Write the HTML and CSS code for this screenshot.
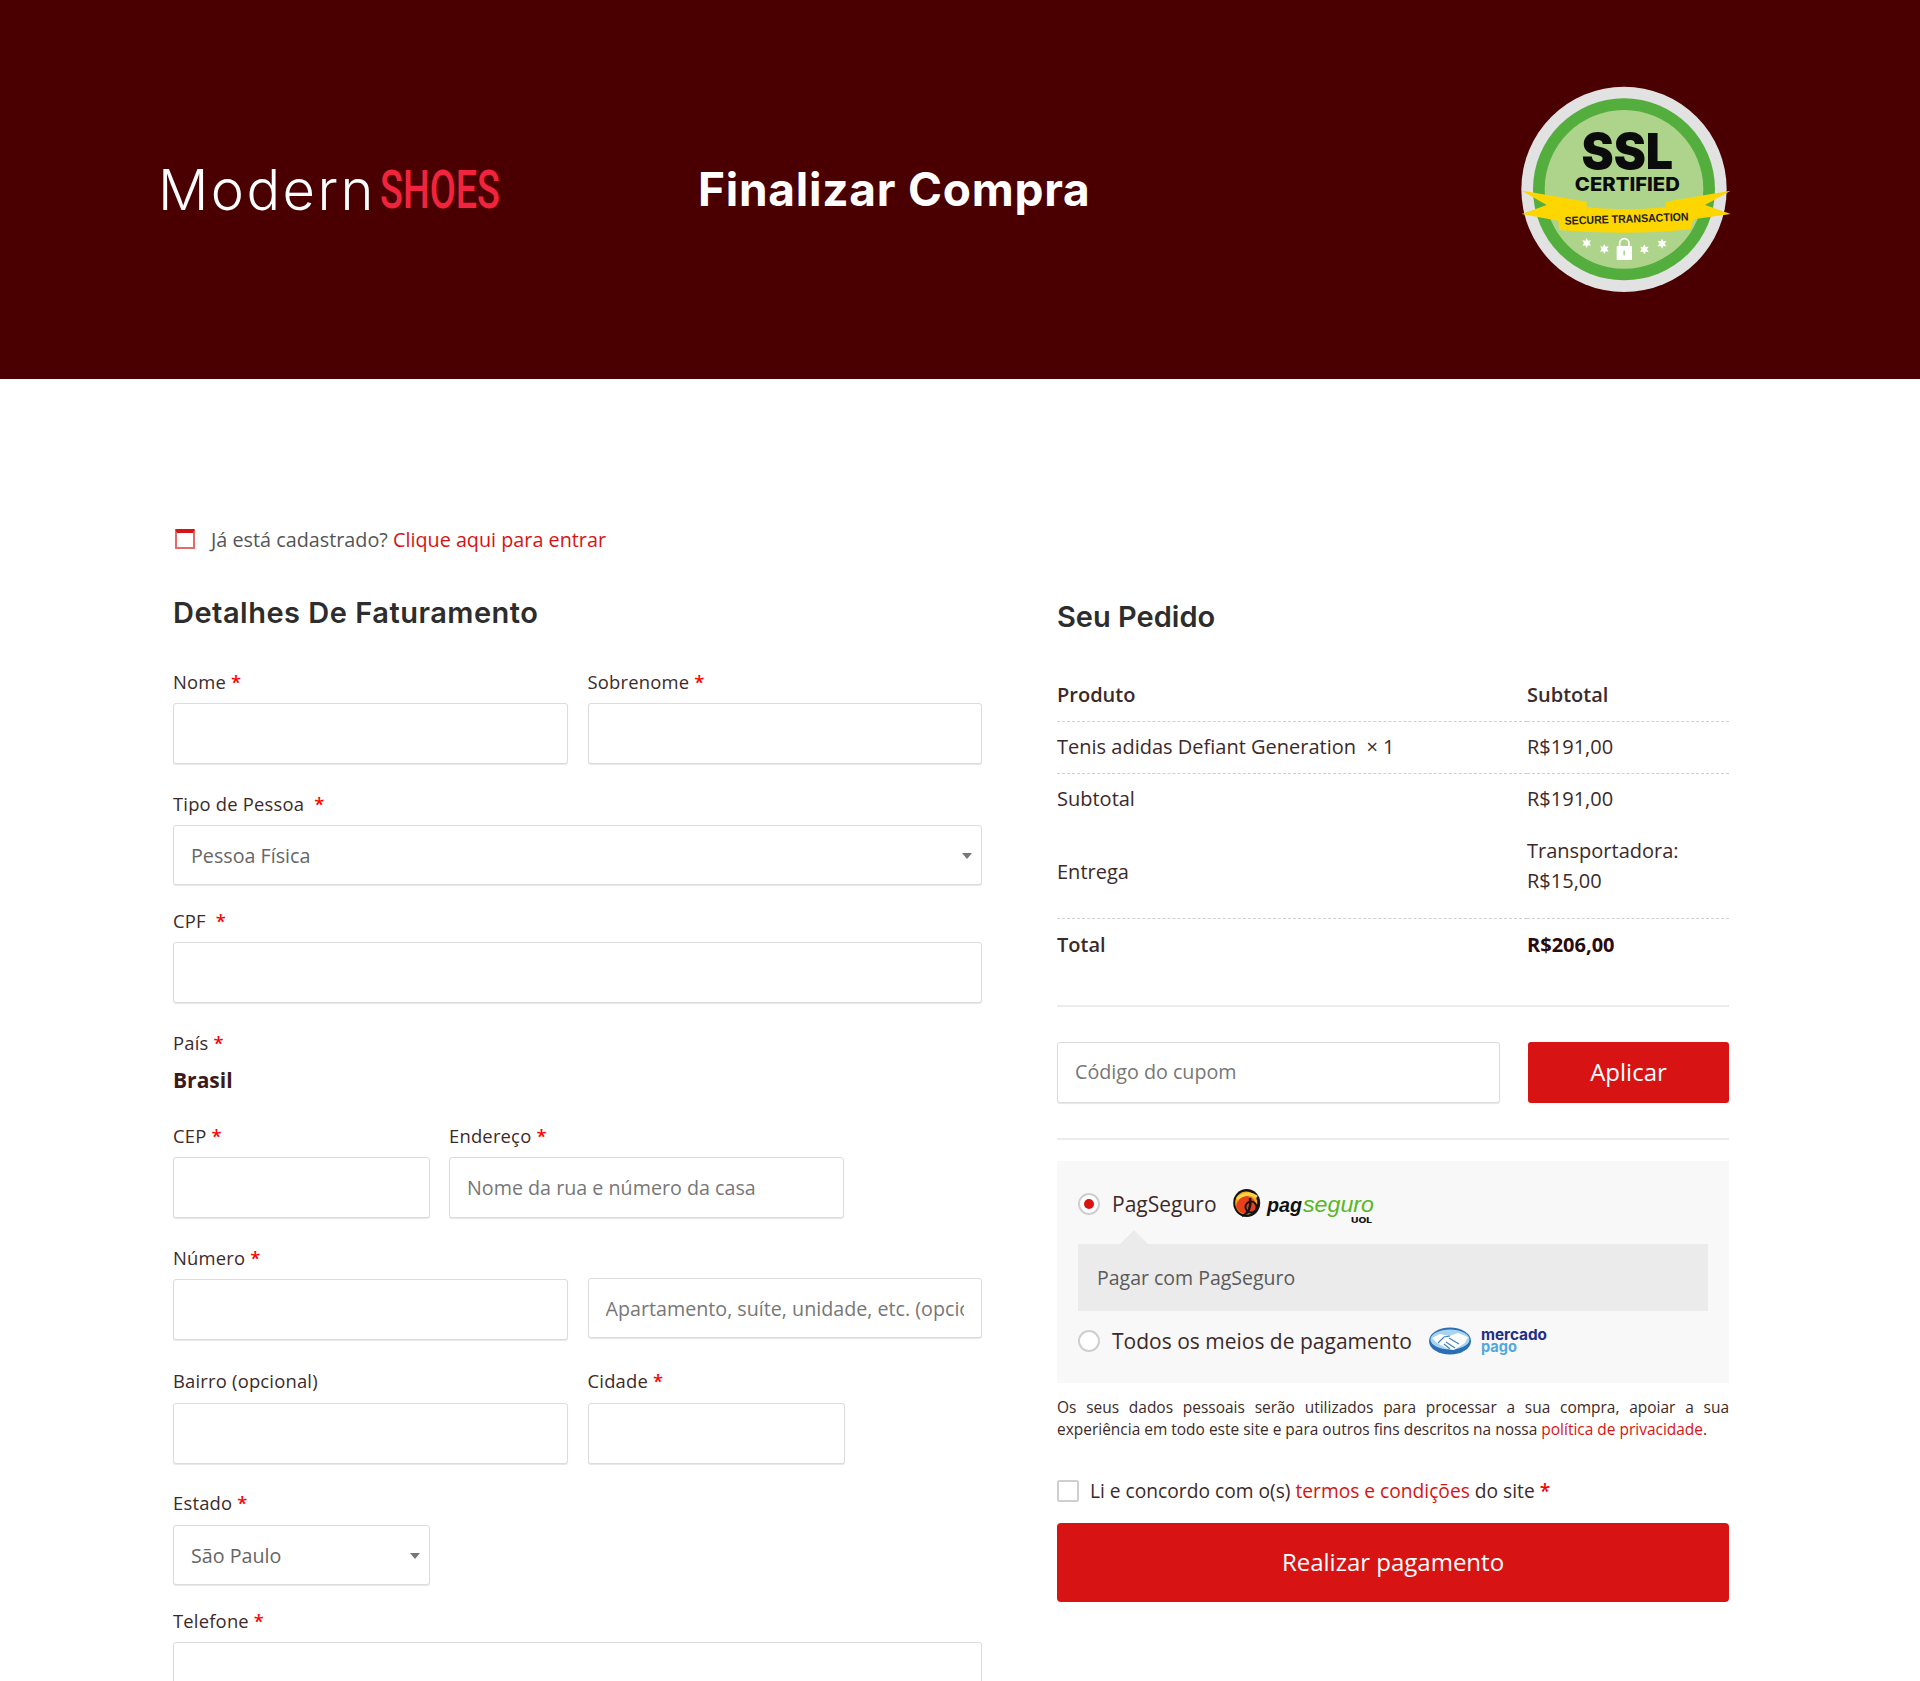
FILE: index.html
```html
<!DOCTYPE html>
<html lang="pt-BR">
<head>
<meta charset="utf-8">
<title>Finalizar Compra</title>
<link rel="stylesheet" href="styles.css">
</head>
<body>
<header class="top">
  <div class="logo"><span class="logo-modern">Modern</span><span class="logo-shoes">SHOES</span></div>
  <h1 class="page-title">Finalizar Compra</h1>
  <svg class="ssl" viewBox="0 0 750 720" width="250" height="240" aria-label="SSL Certified">
    <circle cx="372" cy="358" r="308" fill="#e2e2e2"/>
    <circle cx="372" cy="358" r="273" fill="#54ae3e"/>
    <circle cx="372" cy="358" r="238" fill="#aed48c"/>
    <text x="382" y="297" class="ssl-big" textLength="275" lengthAdjust="spacingAndGlyphs">SSL</text>
    <text x="382" y="364" class="ssl-mid" textLength="315" lengthAdjust="spacingAndGlyphs">CERTIFIED</text>
    <path d="M65 362 260 395V412Q380 424 497 412V395L692 362 615 405 692 432 580 448 572 478Q380 498 178 480L175 452 65 432 140 405Z" fill="#fdd600"/>
    <text x="380" y="458" class="ssl-small" textLength="372" lengthAdjust="spacingAndGlyphs" transform="rotate(-2 380 450)">SECURE TRANSACTION</text>
    <g fill="#fff">
      <path transform="translate(260 519)" d="M0-15 4-7 13-8 8 0 13 8 4 7 0 15-4 7-13 8-8 0-13-8-4-7Z"/>
      <path transform="translate(313 537)" d="M0-15 4-7 13-8 8 0 13 8 4 7 0 15-4 7-13 8-8 0-13-8-4-7Z"/>
      <path transform="translate(433 538)" d="M0-15 4-7 13-8 8 0 13 8 4 7 0 15-4 7-13 8-8 0-13-8-4-7Z"/>
      <path transform="translate(486 521)" d="M0-15 4-7 13-8 8 0 13 8 4 7 0 15-4 7-13 8-8 0-13-8-4-7Z"/>
      <rect x="350" y="528" width="46" height="42" rx="2"/>
      <path d="M359 530V520a14 14 0 0 1 28 0V530" fill="none" stroke="#fff" stroke-width="5"/>
      <rect x="370" y="542" width="5" height="14" fill="#aed48c"/>
    </g>
  </svg>
</header>

<main class="checkout">
  <section class="billing">
    <p class="notice">
      <span class="notice-icon"></span>
      <span>Já está cadastrado? <a href="#" class="link">Clique aqui para entrar</a></span>
    </p>
    <h2 class="billing-title">Detalhes De Faturamento</h2>

    <div class="row">
      <div class="field half"><label>Nome <b>*</b></label><input class="input"></div>
      <div class="field half"><label>Sobrenome <b>*</b></label><input class="input"></div>
    </div>
    <div class="field field-tight"><label>Tipo de Pessoa &nbsp;<b>*</b></label>
      <div class="select">Pessoa Física</div>
    </div>
    <div class="field"><label>CPF &nbsp;<b>*</b></label><input class="input"></div>
    <div class="field country"><label>País <b>*</b></label><strong class="country-name">Brasil</strong></div>
    <div class="row">
      <div class="field third"><label>CEP <b>*</b></label><input class="input"></div>
      <div class="field half"><label>Endereço <b>*</b></label><input class="input" placeholder="Nome da rua e número da casa"></div>
    </div>
    <div class="row row-wide">
      <div class="field half"><label>Número <b>*</b></label><input class="input"></div>
      <div class="half apt"><input class="input input-short" placeholder="Apartamento, suíte, unidade, etc. (opcional)"></div>
    </div>
    <div class="row row-loose">
      <div class="field half"><label>Bairro (opcional)</label><input class="input"></div>
      <div class="field third"><label>Cidade <b>*</b></label><input class="input"></div>
    </div>
    <div class="field field-tight third"><label>Estado <b>*</b></label>
      <div class="select select-state">São Paulo</div>
    </div>
    <div class="field"><label>Telefone <b>*</b></label><input class="input"></div>
  </section>

  <aside class="order">
    <h2 class="order-title">Seu Pedido</h2>
    <table class="order-table">
      <thead>
        <tr class="dash"><th>Produto</th><th class="col-2">Subtotal</th></tr>
      </thead>
      <tbody>
        <tr class="dash"><td>Tenis adidas Defiant Generation &nbsp;<span class="qty">× 1</span></td><td class="col-2">R$191,00</td></tr>
        <tr><td>Subtotal</td><td class="col-2">R$191,00</td></tr>
        <tr class="dash"><td>Entrega</td><td class="col-2 ship">Transportadora:<br>R$15,00</td></tr>
        <tr class="total"><th>Total</th><th class="col-2 strong">R$206,00</th></tr>
      </tbody>
    </table>
    <div class="coupon">
      <input class="input coupon-input" placeholder="Código do cupom">
      <button class="btn btn-apply" type="button">Aplicar</button>
    </div>

    <div class="payment">
      <div class="pay-option">
        <span class="radio radio-on"></span>
        <span>PagSeguro</span>
        <svg class="pag-logo" viewBox="0 0 150 42" width="150" height="42" aria-label="PagSeguro UOL">
          <ellipse cx="17.7" cy="20" rx="13.5" ry="14" fill="#141414"/>
          <ellipse cx="17.2" cy="20" rx="11" ry="11.5" fill="#f6a81c"/>
          <path d="M7 24Q8 14 18 13Q25 14 27 21Q27 31 17 31Q10 30 7 24Z" fill="#e8401c"/>
          <path d="M8 16Q18 7 28 14" fill="none" stroke="#fbd34d" stroke-width="3"/>
          <path d="M13 33Q23 29 21 15" fill="none" stroke="#141414" stroke-width="2.4"/>
          <circle cx="22" cy="24" r="5.5" fill="none" stroke="#141414" stroke-width="2"/>
          <text x="38" y="29" class="pag-a" textLength="35" lengthAdjust="spacingAndGlyphs">pag</text>
          <text x="74" y="29" class="pag-b" textLength="71" lengthAdjust="spacingAndGlyphs">seguro</text>
          <text x="122" y="40" class="pag-c" textLength="21" lengthAdjust="spacingAndGlyphs">UOL</text>
        </svg>
      </div>
      <div class="pay-desc">Pagar com PagSeguro</div>
      <div class="pay-option pay-option-2">
        <span class="radio"></span>
        <span>Todos os meios de pagamento</span>
        <svg class="mp-logo" viewBox="0 0 122 34" width="122" height="34" aria-label="Mercado Pago">
          <ellipse cx="21" cy="17" rx="21" ry="13.5" fill="#2a6fb5"/>
          <ellipse cx="21" cy="15.5" rx="19.5" ry="10" fill="#a8d4f0"/>
          <path d="M3 14 11 10 20 12 29 9 39 13 36 19 25 26 19 25 8 19Z" fill="#fff"/>
          <path d="M9 19 15 13 21 12M20 14 30 20M17 18 26 24M15 20 21 25" fill="none" stroke="#3f82c0" stroke-width="1.2"/>
          <text x="52" y="16" class="mp-a" textLength="66" lengthAdjust="spacingAndGlyphs">mercado</text>
          <text x="52" y="28" class="mp-b" textLength="36" lengthAdjust="spacingAndGlyphs">pago</text>
        </svg>
      </div>
    </div>

    <p class="privacy">Os seus dados pessoais serão utilizados para processar a sua compra, apoiar a sua experiência em todo este site e para outros fins descritos na nossa <a href="#" class="link">política de privacidade</a>.</p>
    <div class="terms">
      <span class="check"></span>
      <span>Li e concordo com o(s) <a href="#" class="link">termos e condições</a> do site <b>*</b></span>
    </div>
    <button class="btn btn-pay" type="button">Realizar pagamento</button>
  </aside>
</main>
</body>
</html>
```

FILE: styles.css
```css
* { box-sizing: border-box; }
html, body { margin: 0; height: 1681px; overflow: hidden; }
body {
  background: #fff;
  color: #3c2a2a;
  font-family: "Open Sans", "Liberation Sans", sans-serif;
  font-size: 20px;
}
a { text-decoration: none; }
.link { color: #d81313; }

/* Header */
.top {
  height: 379px;
  background: #4a0000;
  display: flex;
  align-items: center;
  padding-left: 158px;
  position: relative;
}
.logo {
  width: 540px;
  display: flex;
  align-items: center;
  height: 60px;
}
.logo-modern {
  color: #fff;
  font-family: Inter, sans-serif;
  font-weight: 300;
  font-size: 56px;
  letter-spacing: 2.4px;
}
.logo-shoes {
  color: #f0243c;
  font-family: Roboto, sans-serif;
  font-weight: 500;
  font-size: 54px;
  display: inline-block;
  transform: scaleX(.7);
  transform-origin: left center;
  margin-left: 4px;
}
.page-title {
  margin: 0 0 2px;
  color: #fff;
  font-family: Inter, sans-serif;
  font-weight: 700;
  font-size: 46px;
  letter-spacing: .75px;
  white-space: nowrap;
}
.ssl { margin-left: auto; margin-right: 170px; flex: none; }
.ssl-big { font-family: Inter, sans-serif; font-weight: 900; font-size: 150px; text-anchor: middle; fill: #0b0b0b; }
.ssl-mid { font-family: Inter, sans-serif; font-weight: 800; font-size: 56px; text-anchor: middle; fill: #0b0b0b; }
.ssl-small { font-family: "Liberation Sans", sans-serif; font-weight: 700; font-size: 34px; text-anchor: middle; fill: #222; }

/* Layout */
.checkout {
  display: flex;
  padding: 0 191px 0 173px;
  justify-content: space-between;
}
.billing { width: 809px; padding-top: 148px; }
.order { width: 672px; padding-top: 220px; }

.notice {
  margin: 0 0 0 2px;
  height: 26px;
  line-height: 26px;
  display: flex;
  align-items: center;
  gap: 16px;
  color: #555;
  font-size: 19.8px;
}
.notice-icon {
  width: 20px;
  height: 20px;
  margin-top: -2px;
  border: 2px solid #e56a6a;
  border-top: 4px solid #d81313;
  border-radius: 1px;
}
.billing-title, .order-title {
  margin: 0;
  font-family: Inter, sans-serif;
  font-weight: 600;
  font-size: 29px;
  line-height: 36px;
  color: #2d2d2d;
}
.billing-title { margin-top: 42px; margin-bottom: 39px; letter-spacing: .5px; }

/* Form */
.row { display: flex; gap: 20px; }
.row-wide { margin-bottom: 1px; }
.row-loose label { margin-bottom: 10px; }
.row-loose .field { margin-bottom: 27px; }
.field { display: flex; flex-direction: column; margin-bottom: 28px; }
.field-tight { margin-bottom: 24px; }
.half { width: 394.5px; }
.third { width: 257px; }
.row > .third + .half { width: 395px; margin-left: -1px; }
label {
  font-size: 18.4px;
  line-height: 24px;
  height: 24px;
  margin-bottom: 9px;
  letter-spacing: .2px;
  color: #3c2a2a;
}
label b, .terms b { color: #f00; font-weight: 600; }
.input, .select {
  display: block;
  width: 100%;
  height: 61px;
  border: 1px solid #dcdcdc;
  border-radius: 3px;
  box-shadow: 0 1px 1px rgba(0, 0, 0, .1);
  background: #fff;
  padding: 0 17px;
  font: 19.7px "Open Sans", sans-serif;
  color: #666;
  outline: 0;
}
.input::placeholder { color: #777; opacity: 1; }
.input-short { height: 60px; }
.apt { padding-top: 32px; }
.select {
  height: 60px;
  line-height: 60px;
  position: relative;
}
.select::after {
  content: "";
  position: absolute;
  right: 9px;
  top: 27px;
  border: 5px solid transparent;
  border-top: 6px solid #777;
  border-bottom: 0;
}
.select-state { margin-top: 1px; }
.country { margin-bottom: 0; height: 93px; }
.country label { margin-bottom: 9px; }
.country-name { font-size: 21px; line-height: 26px; color: #3a1a1a; }
.country label + .country-name { margin-top: 3px; }

/* Order */
.order-title { margin-bottom: 34px; }
.order-table {
  width: 100%;
  border-collapse: collapse;
  table-layout: fixed;
  line-height: 30px;
}
.order-table th { font-weight: 600; text-align: left; padding: 0; }
.order-table td { padding: 0; }
.order-table tr { height: 52px; }
.dash { border-bottom: 1px dashed #cfcfcf; }
.col-2 { width: 202px; padding-left: 0; }
.ship { padding: 11px 0 22px !important; }
.total .strong { font-weight: 700; color: #2a0a0a; }
.order-table tr.total { height: 53px; }

.coupon {
  margin-top: 33px;
  padding: 35px 0 35px;
  border-top: 2px solid #ececec;
  border-bottom: 2px solid #ececec;
  display: flex;
  justify-content: space-between;
  align-items: center;
}
.coupon-input { width: 443px; padding-bottom: 2px; }
.btn {
  border: 0;
  background: #d81313;
  color: #fff;
  font-family: "Open Sans", sans-serif;
  border-radius: 3px;
  cursor: pointer;
}
.btn-apply { width: 201px; height: 61px; font-size: 24px; padding-bottom: 2px; }
.payment {
  margin-top: 21px;
  height: 222px;
  background: #f8f8f8;
  padding: 23px 21px 0;
}
.pay-option {
  display: flex;
  align-items: center;
  height: 40px;
  font-size: 21px;
  color: #3c2a2a;
  gap: 12px;
}
.radio {
  flex: none;
  width: 22px;
  height: 22px;
  border-radius: 50%;
  border: 2px solid #cfcfcf;
  background: #fff;
  display: flex;
  align-items: center;
  justify-content: center;
}
.radio-on::after {
  content: "";
  width: 10px;
  height: 10px;
  border-radius: 50%;
  background: #d81313;
}
.pag-logo { flex: none; }
.mp-logo { margin-left: 5px; flex: none; }
.pag-a { font: italic 700 21px "Liberation Sans", sans-serif; fill: #111; }
.pag-b { font: italic 400 22px "Liberation Sans", sans-serif; fill: #58b71f; }
.pag-c { font: 800 8px Inter, sans-serif; fill: #111; }
.mp-a { font: 700 15px Inter, sans-serif; fill: #1f2e86; }
.mp-b { font: 700 15px Inter, sans-serif; fill: #4fa9dc; }
.pay-desc {
  margin-top: 20px;
  height: 67px;
  line-height: 67px;
  background: #ebebeb;
  padding-left: 19px;
  color: #5a5a5a;
  font-size: 19.5px;
  position: relative;
}
.pay-desc::before {
  content: "";
  position: absolute;
  left: 42px;
  top: -14px;
  border: 14px solid transparent;
  border-top: 0;
  border-bottom-color: #ebebeb;
}
.pay-option-2 { margin-top: 10px; }
.privacy {
  margin: 13px 0 0;
  font-size: 15.48px;
  line-height: 22px;
  text-align: justify;
  color: #3c2a2a;
}
.terms {
  margin-top: 39px;
  display: flex;
  align-items: center;
  gap: 11px;
  height: 24px;
  font-size: 19.2px;
}
.check {
  width: 22px;
  height: 22px;
  border: 2px solid #cfcfcf;
  border-radius: 2px;
  background: #fff;
}
.btn-pay {
  display: block;
  width: 100%;
  height: 79px;
  margin-top: 20px;
  font-size: 24px;
  border-radius: 4px;
  padding-bottom: 2px;
}
```
